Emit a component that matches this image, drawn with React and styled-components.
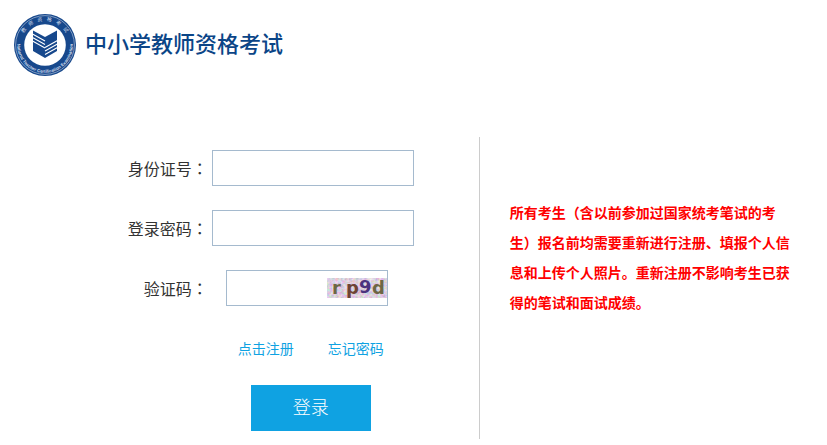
import React from 'react';
import styled, { createGlobalStyle } from 'styled-components';

const GlobalStyle = createGlobalStyle`
  * {
    box-sizing: border-box;
  }
  body {
    margin: 0;
    background: #fff;
    color: #333;
    font-family: 'Noto Sans CJK SC', sans-serif;
    font-size: 16px;
    text-spacing-trim: space-all;
  }
`;

const Header = styled.header`
  display: flex;
  align-items: center;
  gap: 8px;
  padding: 13px 13px 0;

  h1 {
    margin: 0;
    padding-bottom: 6px;
    color: #0b4587;
    font-size: 22px;
    font-weight: 500;
    line-height: 32px;
  }
`;

const Main = styled.main`
  display: flex;
  margin-top: 60px;
`;

const LoginForm = styled.form`
  flex: 0 0 58%;
  display: flex;
  flex-direction: column;
  gap: 24px;
  padding: 13px 65px 8px 0;
  border-right: 1px solid #ccc;
`;

const Row = styled.div`
  display: flex;
  align-items: center;
  gap: 4px;
`;

const Label = styled.label`
  flex: 1;
  text-align: right;
  line-height: 36px;
`;

// the full-width colon is centred in its box in this face
const Colon = styled.span`
  font-family: 'Noto Sans CJK TC', sans-serif;
`;

const Field = styled.div`
  width: 202px;
`;

const TextInput = styled.input`
  display: block;
  width: 100%;
  height: 36px;
  padding: 0 8px;
  border: 1px solid #a5bace;
  font: inherit;
`;

const CaptchaBox = styled.div`
  display: flex;
  align-items: center;
  width: 162px;
  height: 36px;
  margin-left: 14px;
  border: 1px solid #a5bace;

  input {
    flex: 1;
    min-width: 0;
    height: 100%;
    padding: 0 8px;
    border: 0;
    font: inherit;
  }

  svg {
    overflow: visible;
  }
`;

const Actions = styled.div`
  align-self: flex-end;
  display: flex;
  flex-direction: column;
  align-items: center;
  gap: 19px;
  width: 202px;
  padding-right: 4px;
`;

const Links = styled.nav`
  display: flex;
  gap: 34px;
  font-size: 14px;
  line-height: 36px;

  a {
    color: #0fa2e2;
    text-decoration: none;
  }
`;

const SubmitButton = styled.button`
  width: 120px;
  height: 46px;
  padding: 0 0 4px;
  border: 0;
  background: #0fa2e2;
  color: #fff;
  font-family: inherit;
  font-size: 18px;
  font-weight: 300;
  cursor: pointer;
`;

const Notice = styled.aside`
  flex: 1;
  padding: 60px 30px 0;

  p {
    max-width: 700px;
    margin: 0;
    color: #f00;
    font-size: 14px;
    font-weight: 700;
    line-height: 30px;
  }
`;

function Logo() {
  return (
    <svg width="64" height="64" viewBox="0 0 64 64" aria-hidden="true">
      <defs>
        <path id="ring-top" d="M8 32a24 24 0 0 1 48 0" />
        <path id="ring-bottom" d="M6 22.200a27.800 27.800 0 1 0 52 0" />
      </defs>
      <circle cx="32" cy="32" r="31" fill="#17488c" />
      <circle cx="32" cy="32" r="29.4" fill="none" stroke="#a9bdd8" strokeWidth="0.7" />
      <circle cx="32" cy="32" r="20.8" fill="#fff" />
      <g fill="#d5dfec" textAnchor="middle">
        <text fontSize="5" letterSpacing="4">
          <textPath href="#ring-top" startOffset="52%">教师资格考试</textPath>
        </text>
        <text fontSize="4.4" fontWeight="700" fontFamily="Liberation Sans, sans-serif">
          <textPath href="#ring-bottom" startOffset="50%">
            National Teacher Certification Examination
          </textPath>
        </text>
      </g>
      <g fill="#17488c">
        <path d="M20 17.500l12 6.500v21l-12-7z" />
        <path d="M44 17.500l-12 6.500v21l12-7z" />
      </g>
      <g stroke="#fff" strokeWidth="1.100">
        <path d="M19.500 21l12.500 7M19.500 24.500l12.500 7M19.500 28l12.500 7" />
        <path d="M32 34.500l12.500-7M32 38l12.500-7M32 41.500l12.500-7" />
      </g>
    </svg>
  );
}

function Captcha() {
  return (
    <svg width="60" height="20" viewBox="0 0 60 20" role="img" aria-label="验证码">
      <filter id="grain" x="0" y="0" width="100%" height="100%">
        <feTurbulence type="fractalNoise" baseFrequency="0.35" numOctaves="2" seed="4" />
        <feColorMatrix
          values="0.9 0 0 0 0.3
                  0 0.9 0 0 0.2
                  0 0 0.8 0 0.36
                  0 0 0 0 1"
        />
      </filter>
      <rect width="60" height="20" fill="#d3c2d8" />
      <rect width="60" height="20" filter="url(#grain)" opacity="0.8" />
      <g fontFamily="DejaVu Sans, sans-serif" fontSize="18" fontWeight="700">
        <text x="5" y="16" fill="#6d6644">r</text>
        <text x="19" y="16" fill="#6f4334">p</text>
        <text x="32" y="15" fill="#4b347e">9</text>
        <text x="45" y="16" fill="#6d6644">d</text>
      </g>
    </svg>
  );
}

export default function App() {
  return (
    <>
      <GlobalStyle />
      <Header>
        <Logo />
        <h1>中小学教师资格考试</h1>
      </Header>
      <Main>
        <LoginForm onSubmit={e => e.preventDefault()}>
          <Row>
            <Label htmlFor="idNumber">
              身份证号<Colon lang="zh-Hant">：</Colon>
            </Label>
            <Field>
              <TextInput id="idNumber" type="text" />
            </Field>
          </Row>
          <Row>
            <Label htmlFor="password">
              登录密码<Colon lang="zh-Hant">：</Colon>
            </Label>
            <Field>
              <TextInput id="password" type="password" />
            </Field>
          </Row>
          <Row>
            <Label htmlFor="captcha">
              验证码<Colon lang="zh-Hant">：</Colon>
            </Label>
            <Field>
              <CaptchaBox>
                <input id="captcha" type="text" autoComplete="off" />
                <Captcha />
              </CaptchaBox>
            </Field>
          </Row>
          <Actions>
            <Links>
              <a href="#register">点击注册</a>
              <a href="#forgot">忘记密码</a>
            </Links>
            <SubmitButton type="submit">登录</SubmitButton>
          </Actions>
        </LoginForm>
        <Notice>
          <p>
            所有考生（含以前参加过国家统考笔试的考生）报名前均需要重新进行注册、填报个人信息和上传个人照片。重新注册不影响考生已获得的笔试和面试成绩。
          </p>
        </Notice>
      </Main>
    </>
  );
}
